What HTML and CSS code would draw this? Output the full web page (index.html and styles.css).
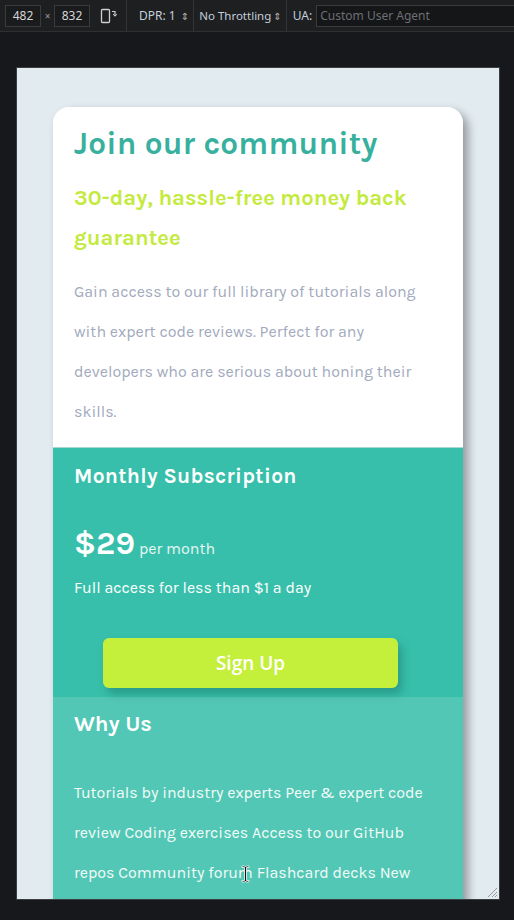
FILE: index.html
```html
<!DOCTYPE html>
<html>
<head>
<meta charset="utf-8">
<link rel="stylesheet" href="styles.css">
</head>
<body>
<div class="toolbar">
  <div class="dim">482</div>
  <span class="times">×</span>
  <div class="dim">832</div>
  <svg class="rotate" width="18" height="16" viewBox="0 0 18 16">
    <rect x="1.5" y="1.5" width="8" height="13" rx="1" fill="none" stroke="#cfcfcf" stroke-width="1.3"/>
    <path d="M12 3.5 h3 v3" fill="none" stroke="#cfcfcf" stroke-width="1.2"/>
    <path d="M13.2 6 l1.8 2 l1.8 -2" fill="none" stroke="#cfcfcf" stroke-width="1.1"/>
  </svg>
  <span class="sep"></span>
  <span class="sel dpr">DPR: 1 <span class="arr">⇕</span></span>
  <span class="sep"></span>
  <span class="sel thr">No Throttling<span class="arr">⇕</span></span>
  <span class="sep"></span>
  <span class="ua">UA:</span>
  <div class="uainput">Custom User Agent</div>
</div>
<div class="stage">
  <div class="device">
    <div class="card">
      <section class="intro">
        <h1 class="title">Join our community</h1>
        <h2 class="guarantee">30-day, hassle-free money back guarantee</h2>
        <p class="desc">Gain access to our full library of tutorials along with expert code reviews. Perfect for any developers who are serious about honing their skills.</p>
      </section>
      <section class="sub">
        <h3 class="sub-title">Monthly Subscription</h3>
        <div class="price"><span class="amount">$29</span> <span class="per">per month</span></div>
        <p class="access">Full access for less than $1 a day</p>
        <div class="btn-wrap"><button class="signup">Sign Up</button></div>
      </section>
      <section class="why">
        <h3 class="why-title">Why Us</h3>
        <p class="why-list">Tutorials by industry experts Peer &amp; expert code review Coding exercises Access to our GitHub repos Community forum Flashcard decks New videos every week</p>
      </section>
    </div>
    <svg class="cursor" width="9" height="18" viewBox="0 0 9 18">
      <path d="M1 1 h2.5 l1 1 l1 -1 h2.5 v1.5 h-2.5 v13 h2.5 v1.5 h-2.5 l-1 -1 l-1 1 h-2.5 v-1.5 h2.5 v-13 h-2.5 z" fill="#111" stroke="#fff" stroke-width="0.8"/>
    </svg>
    <svg class="resize" width="12" height="12" viewBox="0 0 12 12">
      <path d="M11 2 L2 11 M11 6 L6 11 M11 9 L9 11" stroke="#9a9a9a" stroke-width="1"/>
    </svg>
  </div>
</div>
</body>
</html>
```
FILE: styles.css
```css
* { box-sizing: border-box; }
html, body { margin: 0; padding: 0; }
body {
  background: #17181b;
  width: 514px;
  height: 920px;
  overflow: hidden;
  font-family: "Karla", "Noto Sans", sans-serif;
}
.toolbar {
  height: 32px;
  background: #1e1f21;
  border-bottom: 1px solid #2f3033;
  display: flex;
  align-items: center;
  padding-left: 5px;
  font-family: "Noto Sans", "DejaVu Sans", sans-serif;
  font-size: 12px;
  color: #d0d0d0;
  white-space: nowrap;
  overflow: hidden;
}
.toolbar > * { flex-shrink: 0; }
.dim {
  width: 36px;
  height: 22px;
  border: 1px solid #3a3b3e;
  background: #1a1b1d;
  display: flex;
  align-items: center;
  justify-content: center;
  color: #d6d6d6;
}
.times { width: 13px; text-align: center; font-size: 10px; color: #9a9a9a; }
.rotate { margin-left: 10px; margin-right: 8px; }
.sep { width: 1px; align-self: stretch; background: #333437; }
.sel { color: #c4d0dc; }
.dpr { margin-left: 12px; margin-right: 4px; }
.thr { margin-left: 5px; margin-right: 4px; font-size: 11.5px; }
.arr { font-size: 10px; color: #b0b0b0; margin-left: 2px; }
.ua { margin-left: 6px; color: #c4d0dc; }
.uainput {
  margin-left: 4px;
  height: 22px;
  width: 220px;
  border: 1px solid #3a3b3e;
  background: #151618;
  color: #6c6f74;
  display: flex;
  align-items: center;
  padding-left: 3px;
}
.stage {
  padding-top: 36px;
  padding-left: 17px;
}
.device {
  position: relative;
  width: 482px;
  height: 831px;
  background: #e2ebef;
  outline: 1px solid #3c3d40;
  overflow: hidden;
  padding-top: 39px;
}
.card {
  width: 410px;
  margin: 0 auto;
  border-radius: 16px 16px 0 0;
  overflow: hidden;
  box-shadow: 5px 5px 10px rgba(0, 0, 0, 0.35);
}
.intro {
  background: #ffffff;
  padding: 16px 21px 15px;
}
.title {
  margin: 0;
  font-size: 31.5px;
  line-height: 42px;
  font-weight: 700;
  color: #38b09e;
  letter-spacing: 0.2px;
}
.guarantee {
  margin: 13px 0 0;
  font-size: 22px;
  line-height: 40px;
  font-weight: 700;
  color: #c3ea3c;
}
.desc {
  margin: 14px 0 0;
  font-size: 16px;
  line-height: 40px;
  color: #a2aabd;
}
.sub {
  background: #37bfab;
  padding: 10px 21px 9px;
  color: #ffffff;
  border-top: 1px solid #a9d8d2;
}
.sub-title {
  margin: 0;
  font-size: 21px;
  line-height: 36px;
  font-weight: 700;
  letter-spacing: 0.3px;
}
.price {
  margin-top: 31px;
  display: flex;
  align-items: baseline;
  gap: 4px;
}
.amount { font-size: 32px; font-weight: 700; }
.per { font-size: 16px; color: #e6f6f2; }
.access {
  margin: 15px 0 0;
  font-size: 16px;
  line-height: 22px;
}
.btn-wrap {
  display: flex;
  margin-top: 39px;
  padding-left: 29px;
}
.signup {
  width: 295px;
  height: 50px;
  border: none;
  border-radius: 6px;
  background: #c4ef3a;
  color: #ffffff;
  font-family: "Open Sans", "Noto Sans", sans-serif;
  font-size: 19px;
  font-weight: 600;
  box-shadow: 4px 6px 8px rgba(20, 90, 80, 0.35);
}
.why {
  background: #53c7b5;
  padding: 12px 21px 40px;
  color: #ffffff;
}
.why-title {
  margin: 0;
  font-size: 22px;
  line-height: 30px;
  font-weight: 700;
}
.why-list {
  margin: 34px 0 0;
  font-size: 16px;
  line-height: 40px;
  color: #f2fbf8;
}
.cursor {
  position: absolute;
  left: 224px;
  top: 797px;
}
.resize {
  position: absolute;
  right: 1px;
  bottom: 1px;
}
```
